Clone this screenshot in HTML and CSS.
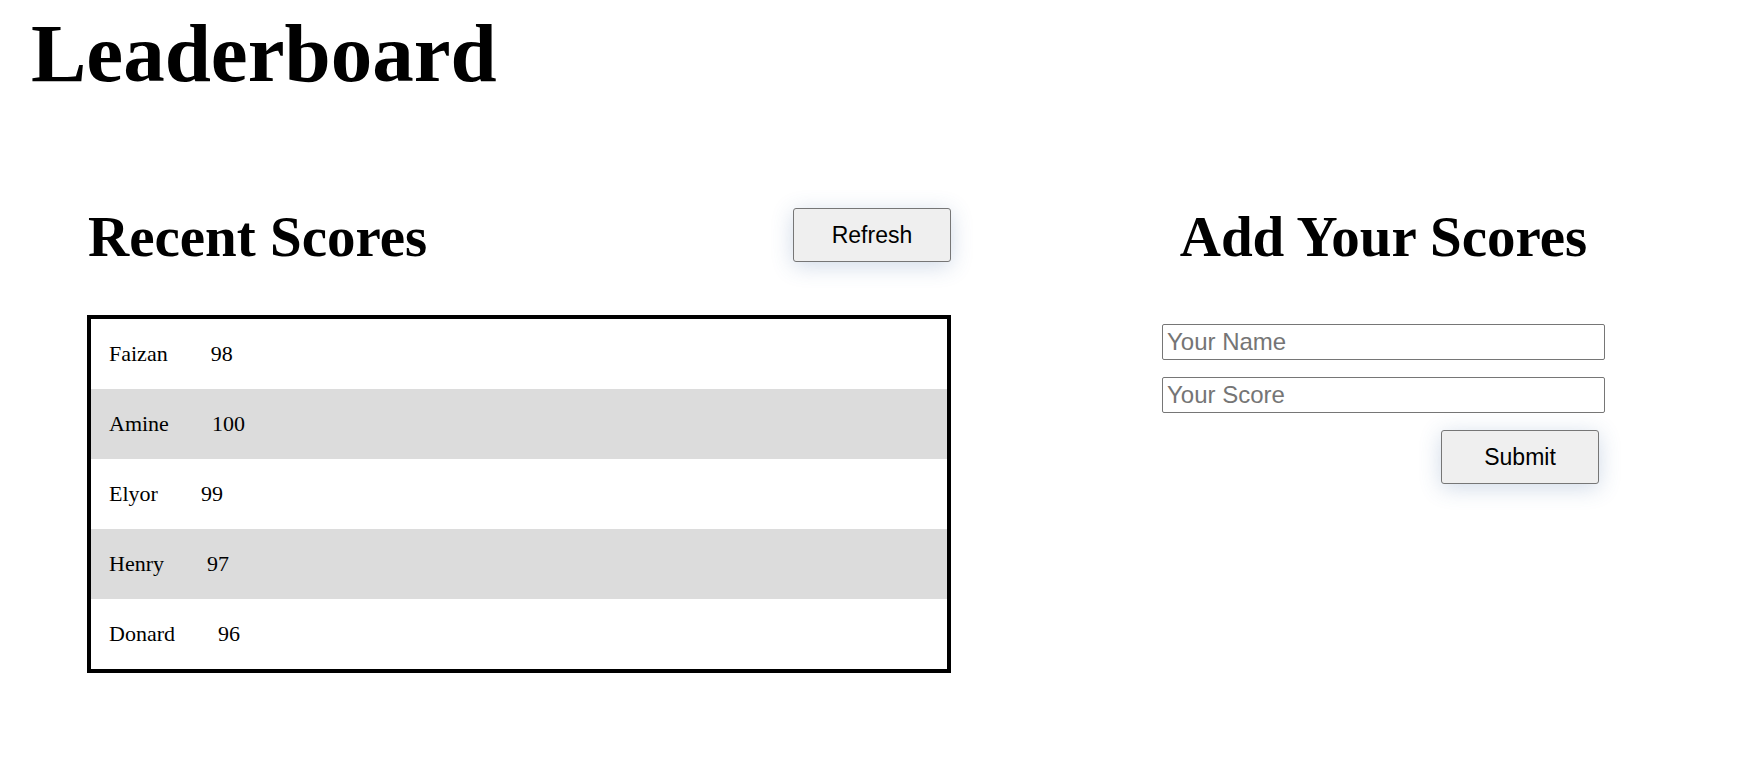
FILE: index.html
```html
<!DOCTYPE html>
<html lang="en">
<head>
<meta charset="utf-8">
<title>Leaderboard</title>
<link rel="stylesheet" href="styles.css">
</head>
<body>
<header class="page-header">
  <h1 class="title">Leaderboard</h1>
</header>
<main class="board">
  <section class="recent">
    <div class="recent-head">
      <h2 class="section-title">Recent Scores</h2>
      <button class="btn" type="button">Refresh</button>
    </div>
    <ul class="score-list">
      <li class="score-row"><span class="name">Faizan</span><span class="score">98</span></li>
      <li class="score-row"><span class="name">Amine</span><span class="score">100</span></li>
      <li class="score-row"><span class="name">Elyor</span><span class="score">99</span></li>
      <li class="score-row"><span class="name">Henry</span><span class="score">97</span></li>
      <li class="score-row"><span class="name">Donard</span><span class="score">96</span></li>
    </ul>
  </section>
  <section class="add">
    <h2 class="section-title add-title">Add Your Scores</h2>
    <form class="add-form">
      <input class="field" type="text" placeholder="Your Name">
      <input class="field" type="text" placeholder="Your Score">
      <button class="btn submit" type="button">Submit</button>
    </form>
  </section>
</main>
</body>
</html>
```

FILE: styles.css
```css
* {
  box-sizing: border-box;
}

body {
  margin: 0;
  font-family: "Liberation Serif", "Times New Roman", serif;
  color: #000;
  background: #fff;
}

.page-header {
  padding: 12px 0 0 31px;
}

.title {
  margin: 0;
  font-size: 83px;
  line-height: 1;
  font-weight: bold;
}

.board {
  display: flex;
  align-items: flex-start;
  margin-top: 113px;
  padding-left: 87px;
}

.recent {
  width: 864px;
}

.recent-head {
  display: flex;
  align-items: flex-start;
  justify-content: space-between;
  padding-left: 1px;
}

.section-title {
  margin: 0;
  font-size: 57px;
  line-height: 1;
  font-weight: bold;
}

.btn {
  width: 158px;
  height: 54px;
  background: #efefef;
  border: 1px solid #767676;
  border-radius: 3px;
  font-family: "Liberation Sans", Arial, sans-serif;
  font-size: 23px;
  color: #000;
  box-shadow: 0 4px 22px rgba(60, 100, 160, 0.24);
  cursor: pointer;
}

.score-list {
  list-style: none;
  margin: 50px 0 0;
  padding: 0;
  border: 4px solid #000;
}

.score-row {
  display: flex;
  align-items: center;
  gap: 43px;
  height: 70px;
  padding: 0 18px;
  font-size: 22px;
}

.score-row:nth-child(even) {
  background: #dcdcdc;
}

.add {
  width: 443px;
  margin-left: 211px;
}

.add-title {
  text-align: center;
}

.add-form {
  display: flex;
  flex-direction: column;
  gap: 17px;
  margin-top: 59px;
}

.field {
  width: 100%;
  height: 36px;
  padding: 0 4px;
  border: 1px solid #767676;
  border-radius: 2px;
  font-family: "Liberation Sans", Arial, sans-serif;
  font-size: 24px;
  color: #000;
}

.field::placeholder {
  color: #757575;
}

.submit {
  align-self: flex-end;
  margin-right: 6px;
}
```
